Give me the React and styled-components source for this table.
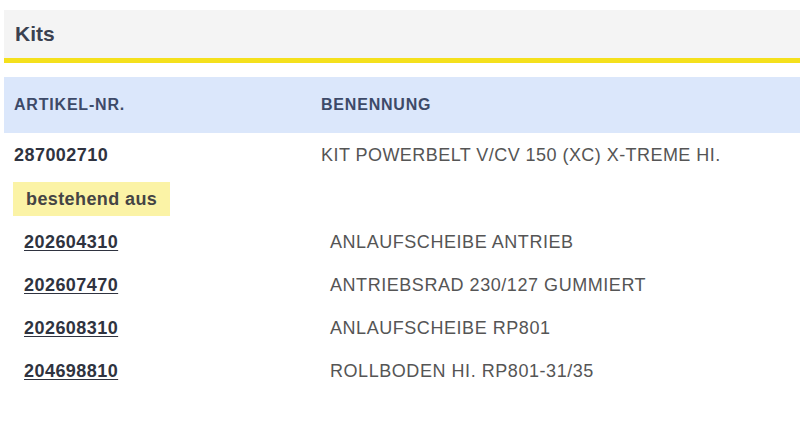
import React from 'react'
import styled, { createGlobalStyle } from 'styled-components'

const Global = createGlobalStyle`
  body {
    margin: 0;
    background: #fff;
    font-family: "Liberation Sans", Arial, sans-serif;
  }
`;

const Page = styled.div`
  padding: 10px 0 0 4px;
  width: 796px;
`;

const TitleBar = styled.div`
  background: #f4f4f4;
  height: 48px;
  border-bottom: 5px solid #f4e01c;
  display: flex;
  align-items: center;
  padding-left: 11px;
  font-size: 21px;
  font-weight: bold;
  color: #3b4150;
`;

const Table = styled.div`
  margin-top: 14px;
`;

const HeadRow = styled.div`
  display: grid;
  grid-template-columns: 307px 1fr;
  align-items: center;
  height: 56px;
  background: #dbe7fb;
  padding-left: 10px;
  font-size: 16px;
  letter-spacing: 0.8px;
  font-weight: bold;
  color: #3d4a68;
`;

const Row = styled.div`
  display: grid;
  grid-template-columns: ${p => (p.$sub ? '306px' : '307px')} 1fr;
  align-items: center;
  height: ${p => (p.$sub ? '43px' : '45px')};
  padding-left: ${p => (p.$sub ? '20px' : '10px')};
  font-size: 18px;
  letter-spacing: ${p => (p.$sub ? '0.55px' : '0.45px')};
`;

const Num = styled.span`
  font-weight: bold;
  color: #2f3340;
  letter-spacing: 0.45px;
  text-decoration: ${p => (p.$link ? 'underline' : 'none')};
  text-underline-offset: 2px;
`;

const Desc = styled.span`
  color: #555;
`;

const BadgeRow = styled.div`
  padding: 4px 0 5px 9px;
`;

const Badge = styled.span`
  display: inline-block;
  background: #fbf3a6;
  padding: 7px 13px 6px 13px;
  font-size: 18px;
  letter-spacing: 0.4px;
  font-weight: bold;
  color: #444;
`;

const parts = [
  ['202604310', 'ANLAUFSCHEIBE ANTRIEB'],
  ['202607470', 'ANTRIEBSRAD 230/127 GUMMIERT'],
  ['202608310', 'ANLAUFSCHEIBE RP801'],
  ['204698810', 'ROLLBODEN HI. RP801-31/35'],
];

export default function App() {
  return (
    <Page>
      <Global />
      <TitleBar>Kits</TitleBar>
      <Table>
        <HeadRow>
          <span>ARTIKEL-NR.</span>
          <span>BENENNUNG</span>
        </HeadRow>
        <Row>
          <Num>287002710</Num>
          <Desc>KIT POWERBELT V/CV 150 (XC) X-TREME HI.</Desc>
        </Row>
        <BadgeRow>
          <Badge>bestehend aus</Badge>
        </BadgeRow>
        {parts.map(([n, d]) => (
          <Row $sub key={n}>
            <Num $link>{n}</Num>
            <Desc>{d}</Desc>
          </Row>
        ))}
      </Table>
    </Page>
  )
}
